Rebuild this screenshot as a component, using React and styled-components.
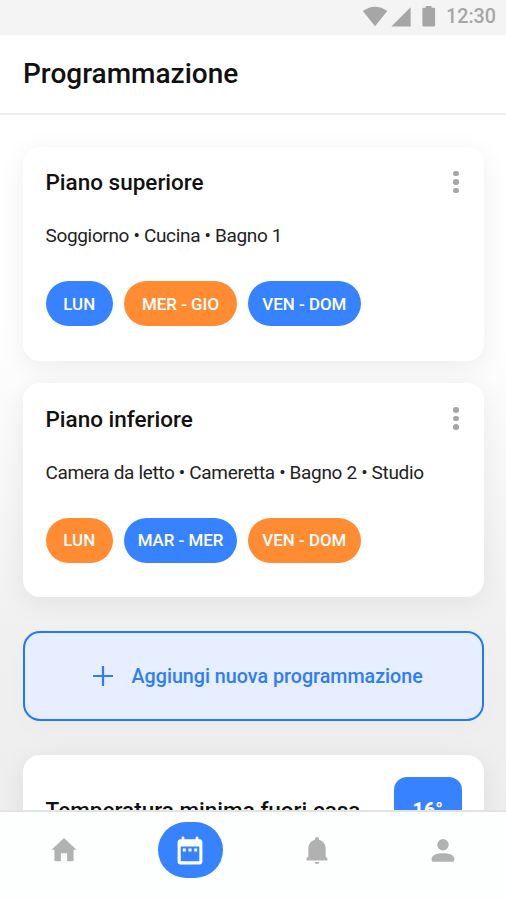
import React, {useState} from 'react';
import styled, {createGlobalStyle} from 'styled-components';

const plans = [
    {
        id: 1,
        title: 'Piano superiore',
        rooms: 'Soggiorno • Cucina • Bagno 1',
        days: [
            {label: 'LUN', color: '#3783ff'},
            {label: 'MER - GIO', color: '#ff8c32'},
            {label: 'VEN - DOM', color: '#3783ff'},
        ],
    },
    {
        id: 2,
        title: 'Piano inferiore',
        rooms: 'Camera da letto • Cameretta • Bagno 2 • Studio',
        days: [
            {label: 'LUN', color: '#ff8c32'},
            {label: 'MAR - MER', color: '#3783ff'},
            {label: 'VEN - DOM', color: '#ff8c32'},
        ],
    },
];

const HomeIcon = () => (
    <svg width="26" height="24" viewBox="0 0 26 24" fill="currentColor">
        <path d="M13 0 25.4 11.8H22.6V22a1.2 1.2 0 0 1-1.2 1.2H16.8a.7.7 0 0 1-.7-.7V15.3H9.9V22.5a.7.7 0 0 1-.7.7H4.6A1.2 1.2 0 0 1 3.4 22V11.8H.6Z"/>
    </svg>
);

const CalendarIcon = () => (
    <svg width="26" height="29" viewBox="0 0 26 29">
        <path d="M3.6 3.3H22.4A3 3 0 0 1 25.4 6.3V25.4a3 3 0 0 1-3 3H3.6a3 3 0 0 1-3-3V6.3a3 3 0 0 1 3-3ZM3.7 10.5V25.3H22.3V10.5Z" fill="#fff" fillRule="evenodd"/>
        <path d="M6 4.5V1.8M20 4.5V1.8" stroke="#fff" strokeWidth="2.8" strokeLinecap="round"/>
        <path d="M5.8 12.6h3v3h-3zM11.5 12.6h3v3h-3zM17.2 12.6h3v3h-3z" fill="#fff"/>
    </svg>
);

const BellIcon = () => (
    <svg width="22" height="27" viewBox="0 0 22 27" fill="currentColor">
        <path d="M11 0a2 2 0 0 1 2 2v.7c4.3 1 6.7 4.7 6.700 9V19.800L21.400 21.200V23.500H.6V21.200L2.300 19.800V11.700C2.300 7.400 4.700 3.700 9 2.700V2a2 2 0 0 1 2-2ZM8.700 25h4.600a2.300 2 0 0 1-4.600 0Z"/>
    </svg>
);

const PersonIcon = () => (
    <svg width="24" height="23" viewBox="0 0 24 23" fill="currentColor">
        <circle cx="12" cy="5.8" r="5.7"/>
        <path d="M.7 19.5C.7 16 6.3 14.2 12 14.2S23.3 16 23.3 19.5V21.3A1.500 1.500 0 0 1 21.800 22.800H2.200A1.500 1.500 0 0 1 .7 21.300Z"/>
    </svg>
);

const navItems = [
    {id: 'home', icon: <HomeIcon/>},
    {id: 'calendar', icon: <CalendarIcon/>},
    {id: 'alerts', icon: <BellIcon/>},
    {id: 'profile', icon: <PersonIcon/>},
];

function App() {
    const [active, setActive] = useState('calendar');

    return (
        <Screen>
            <GlobalStyle/>
            <StatusBar>
                <svg width="74" height="22" viewBox="0 0 74 22" fill="#a6a6a6">
                    <path d="M.8 5.1Q13 -3.6 25.3 5.100L13 20.300Z"/>
                    <path d="M48.6 1.2V20.5H29.4Z"/>
                    <path d="M63.7 0h5.8v1.7h2.3a1.3 1.3 0 0 1 1.3 1.3V19.2a1.3 1.3 0 0 1-1.3 1.3H61.7a1.3 1.3 0 0 1-1.3-1.3V3a1.3 1.3 0 0 1 1.3-1.3h2Z"/>
                </svg>
                <Clock>12:30</Clock>
            </StatusBar>
            <Header>
                <PageTitle>Programmazione</PageTitle>
            </Header>
            <Content>
                {plans.map((plan) => (
                    <Card key={plan.id}>
                        <CardHead>
                            <CardTitle>{plan.title}</CardTitle>
                            <MoreButton>
                                <Dot/>
                                <Dot/>
                                <Dot/>
                            </MoreButton>
                        </CardHead>
                        <Rooms>{plan.rooms}</Rooms>
                        <Days>
                            {plan.days.map((day) => (
                                <Day key={day.label} $color={day.color} $short={day.label.length < 4}>{day.label}</Day>
                            ))}
                        </Days>
                    </Card>
                ))}
                <AddButton>
                    <svg width="20" height="20" viewBox="0 0 20 20">
                        <path d="M10 0V20M0 10H20" stroke="#2f7df6" strokeWidth="2.2"/>
                    </svg>
                    <AddLabel>Aggiungi nuova programmazione</AddLabel>
                </AddButton>
                <TempCard>
                    <TempTitle>Temperatura minima fuori casa</TempTitle>
                    <TempValue>16°</TempValue>
                </TempCard>
            </Content>
            <BottomNav>
                {navItems.map((item) => (
                    <NavItem key={item.id} onClick={() => setActive(item.id)}>
                        <NavPill $active={active === item.id}>{item.icon}</NavPill>
                    </NavItem>
                ))}
            </BottomNav>
        </Screen>
    );
}

export default App;

const GlobalStyle = createGlobalStyle`
    * {
        box-sizing: border-box;
    }
    body {
        margin: 0;
        font-family: Roboto, "Liberation Sans", sans-serif;
    }
    button {
        font-family: inherit;
        border: none;
        padding: 0;
        background: none;
    }
    svg {
        display: block;
        flex-shrink: 0;
    }
    `;

const Screen = styled.div`
    display: flex;
    flex-direction: column;
    width: 506px;
    height: 900px;
    overflow: hidden;
    color: #111111;
    background: #ffffff;
    `;

const StatusBar = styled.div`
    display: flex;
    flex-shrink: 0;
    align-items: center;
    justify-content: flex-end;
    gap: 10px;
    height: 34.5px;
    padding: 0 10px 1px 0;
    background: #f4f4f4;
    `;

const Clock = styled.span`
    font-size: 19.7px;
    font-weight: 500;
    line-height: 22px;
    color: #a6a6a6;
    `;

const Header = styled.header`
    display: flex;
    flex-shrink: 0;
    align-items: center;
    height: 80px;
    padding: 1px 23px 0;
    border-bottom: 2px solid #eeeeee;
    `;

const PageTitle = styled.h1`
    margin: 0;
    font-size: 28px;
    font-weight: 500;
    line-height: 34px;
    `;

const Content = styled.main`
    display: flex;
    flex: 1;
    flex-direction: column;
    min-height: 0;
    overflow: hidden;
    padding: 32px 22px 0 23px;
    background: linear-gradient(#ffffff 0%, #ffffff 30%, #f0f0f0 75%, #eeeeee 100%);
    `;

const Card = styled.section`
    flex-shrink: 0;
    height: 214px;
    margin-bottom: 22.5px;
    padding: 21.5px 22.5px;
    border-radius: 17px;
    background: #ffffff;
    box-shadow: 0 6px 28px rgba(0, 0, 0, 0.07);
    `;

const CardHead = styled.div`
    display: flex;
    align-items: center;
    justify-content: space-between;
    height: 28px;
    `;

const CardTitle = styled.h2`
    margin: 0;
    font-size: 22.5px;
    font-weight: 500;
    line-height: 28px;
    `;

const MoreButton = styled.button`
    display: flex;
    flex-direction: column;
    align-items: center;
    gap: 3px;
    width: 11px;
    `;

const Dot = styled.span`
    width: 5.4px;
    height: 5.4px;
    border-radius: 50%;
    background: #a6a6a6;
    `;

const Rooms = styled.p`
    margin: 28px 0 33px;
    font-size: 19px;
    line-height: 24px;
    letter-spacing: -0.34px;
    white-space: nowrap;
    color: #222222;
    `;

const Days = styled.div`
    display: flex;
    gap: 11.3px;
    `;

const Day = styled.span`
    display: flex;
    align-items: center;
    justify-content: center;
    width: ${(props) => (props.$short ? '67.5px' : '112.5px')};
    height: 45px;
    border-radius: 23px;
    font-size: 16.9px;
    font-weight: 500;
    color: #ffffff;
    background: ${(props) => props.$color};
    `;

const AddButton = styled.button`
    display: flex;
    flex-shrink: 0;
    align-items: center;
    gap: 19px;
    height: 90px;
    margin: 11px 0 34px;
    padding: 0 0 0 67.5px;
    border: 2.5px solid #2379f5;
    border-radius: 17px;
    font-size: 19.7px;
    font-weight: 500;
    color: #2f7df6;
    background: #e6eeff;
    box-shadow: 0 6px 28px rgba(0, 0, 0, 0.02);
    `;

const AddLabel = styled.span`
    padding-top: 2px;
    `;

const TempCard = styled(Card)`
    display: flex;
    align-items: flex-start;
    justify-content: space-between;
    `;

const TempTitle = styled(CardTitle)`
    margin-top: 20px;
    `;

const TempValue = styled.div`
    display: flex;
    align-items: center;
    justify-content: center;
    width: 67.5px;
    height: 67.5px;
    margin-top: 1px;
    border-radius: 13px;
    font-size: 19.7px;
    font-weight: 700;
    color: #ffffff;
    background: #3783ff;
    `;

const BottomNav = styled.nav`
    display: grid;
    flex-shrink: 0;
    grid-template-columns: repeat(4, 1fr);
    height: 90.5px;
    padding: 10.5px 0 0 1px;
    border-top: 2px solid #e2e3e3;
    background: #fdfefe;
    `;

const NavItem = styled.button`
    display: flex;
    align-items: flex-start;
    justify-content: center;
    color: #b1b1b1;
    `;

const NavPill = styled.span`
    display: flex;
    align-items: center;
    justify-content: center;
    width: 64.5px;
    height: 56px;
    border-radius: 28px;
    background: ${(props) => (props.$active ? '#3783ff' : 'transparent')};
    `;
